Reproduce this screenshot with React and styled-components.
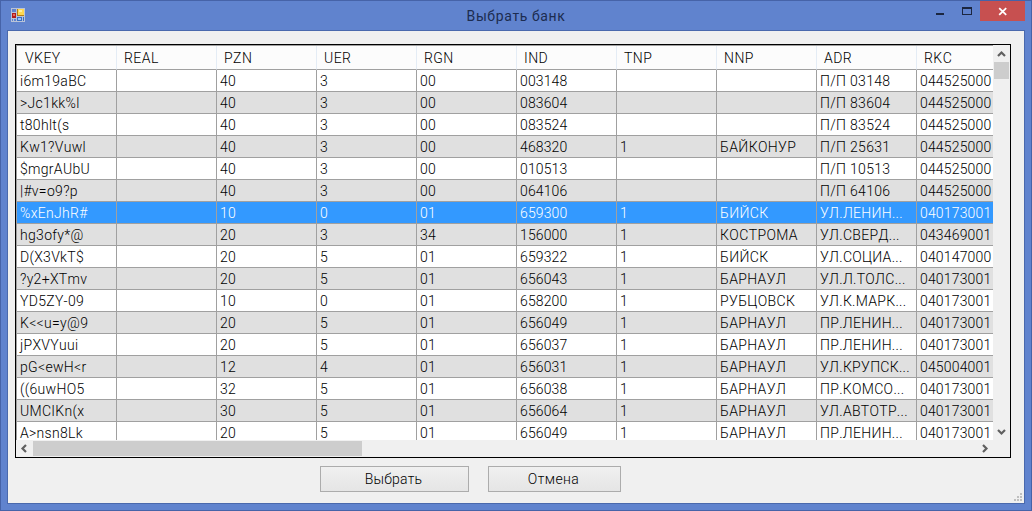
import React from 'react';
import styled, { createGlobalStyle, css } from 'styled-components';

const GlobalStyle = createGlobalStyle`
  * { box-sizing: border-box; }
  html, body, #root { margin: 0; height: 100%; }
  body { overflow: hidden; font-family: Roboto, "Liberation Sans", sans-serif; font-weight: 300; font-size: 14px; color: #000; font-kerning: none; }
`;

const Window = styled.main`
  width: 1032px; height: 511px; display: flex; flex-direction: column;
  background: #6083ce; border: 1px solid #4663a8; padding: 0 6px 6px;
`;
const TitleBar = styled.header`
  height: 29px; flex: none; display: grid; grid-template-columns: 290px 1fr 290px;
`;
const AppIcon = styled.svg`margin: 7px 0 0 4px;`;
const Title = styled.h1`
  margin: 0; padding-top: 5px; text-align: center; font-size: 14px; line-height: 20px; font-weight: 400;
  color: #1c2c50; letter-spacing: .6px;
`;
const Controls = styled.div`display: flex; justify-content: flex-end; align-items: flex-start;`;
const Control = styled.button`
  border: 0; padding: 0; height: 20px; width: ${p => p.$w}px; background: ${p => p.$close ? '#c75050' : 'transparent'};
  svg { display: block; }
`;
const Client = styled.section`
  flex: 1; min-height: 0; background: #f0f0f0; border: 1px solid #4a69ad; padding: 13px 13px 0 7px;
  display: flex; flex-direction: column; position: relative;
`;
const Grid = styled.div`
  width: 996px; height: 414px; border: 1px solid #000; flex: none;
  display: grid; grid-template-columns: 977px 17px; grid-template-rows: 395px 17px;
`;
const Viewport = styled.div`overflow: hidden; background: #fff; border: solid #a0a0a0; border-width: 1px 0 0 1px;`;
const Row = styled.div`
  display: flex; width: 1000px; height: 22px; color: ${p => p.$selected ? '#fff' : '#000'};
  background: ${p => p.$selected ? '#3399ff' : p.$alt ? '#e0e0e0' : '#fff'};
`;
const HeaderRow = styled(Row)`height: 24px; background: #fcfcfc;`;
const Cell = styled.div`
  width: 100px; flex: none; padding: 0 0 0 3px; line-height: 23px; white-space: nowrap; overflow: hidden;
  border: solid #a0a0a0; border-width: 0 1px 1px 0; letter-spacing: ${p => p.$track}px;
`;
const HeaderCell = styled(Cell)`
  padding: 1px 0 0 7px; line-height: 23px; border-right-color: #e4ecf5; letter-spacing: .45px;
  &:first-child { padding-left: 8px; }
`;
const scroll = css`background: #f0f0f0; display: flex;`;
const VScroll = styled.div`${scroll} flex-direction: column; padding-left: 1px; justify-content: space-between;`;
const HScroll = styled.div`${scroll} align-items: center; justify-content: space-between;`;
const VThumb = styled.div`width: 15px; height: 17px; background: #cdcdcd; margin-bottom: auto;`;
const HThumb = styled.div`width: 329px; height: 15px; background: #cdcdcd; margin-right: auto;`;
const Arrow = styled.svg`display: block; flex: none;`;
const Actions = styled.footer`display: flex; gap: 19px; margin: 8px 0 0 305px;`;
const Button = styled.button`
  width: ${p => p.$w}px; height: 26px; padding: 0 2px 0 0; border: 1px solid #acacac;
  background: linear-gradient(#f0f0f0, #e5e5e5); font: inherit; font-kerning: none; color: #000; letter-spacing: ${p => p.$track}px;
`;
const Grip = styled.svg`position: absolute; right: 0; bottom: 0;`;

const columns = ['VKEY', 'REAL', 'PZN', 'UER', 'RGN', 'IND', 'TNP', 'NNP', 'ADR', 'RKC'];
const tracking = [0.3, 0, 0.14, 0.14, 0.14, 0.14, 0.14, 0.38, 0.3, 0.17];
const rows = [
  ['i6m19aBC', '', '40', '3', '00', '003148', '', '', 'П/П 03148', '044525000'],
  ['>Jc1kk%l', '', '40', '3', '00', '083604', '', '', 'П/П 83604', '044525000'],
  ['t80hlt(s', '', '40', '3', '00', '083524', '', '', 'П/П 83524', '044525000'],
  ['Kw1?Vuwl', '', '40', '3', '00', '468320', '1', 'БАЙКОНУР', 'П/П 25631', '044525000'],
  ['$mgrAUbU', '', '40', '3', '00', '010513', '', '', 'П/П 10513', '044525000'],
  ['|#v=o9?p', '', '40', '3', '00', '064106', '', '', 'П/П 64106', '044525000'],
  ['%xEnJhR#', '', '10', '0', '01', '659300', '1', 'БИЙСК', 'УЛ.ЛЕНИН...', '040173001'],
  ['hg3ofy*@', '', '20', '3', '34', '156000', '1', 'КОСТРОМА', 'УЛ.СВЕРД...', '043469001'],
  ['D(X3VkT$', '', '20', '5', '01', '659322', '1', 'БИЙСК', 'УЛ.СОЦИА...', '040147000'],
  ['?y2+XTmv', '', '20', '5', '01', '656043', '1', 'БАРНАУЛ', 'УЛ.Л.ТОЛС...', '040173001'],
  ['YD5ZY-09', '', '10', '0', '01', '658200', '1', 'РУБЦОВСК', 'УЛ.К.МАРК...', '040173001'],
  ['K<<u=y@9', '', '20', '5', '01', '656049', '1', 'БАРНАУЛ', 'ПР.ЛЕНИН...', '040173001'],
  ['jPXVYuui', '', '20', '5', '01', '656037', '1', 'БАРНАУЛ', 'ПР.ЛЕНИН...', '040173001'],
  ['pG<ewH<r', '', '12', '4', '01', '656031', '1', 'БАРНАУЛ', 'УЛ.КРУПСК...', '045004001'],
  ['((6uwHO5', '', '32', '5', '01', '656038', '1', 'БАРНАУЛ', 'ПР.КОМСО...', '040173001'],
  ['UMCIKn(x', '', '30', '5', '01', '656064', '1', 'БАРНАУЛ', 'УЛ.АВТОТР...', '040173001'],
  ['A>nsn8Lk', '', '20', '5', '01', '656049', '1', 'БАРНАУЛ', 'ПР.ЛЕНИН...', '040173001'],
];

export default function App() {
  return (
    <>
      <GlobalStyle />
      <Window>
        <TitleBar>
          <AppIcon width="14" height="14" viewBox="0 0 14 14" shapeRendering="crispEdges">
            <path fill="#b9c3d8" d="M0 0h14v14H0z" />
            <path fill="#6083ce" d="M1 1h4v3H1zM1 11h1v2H1zM3 11h2v2H3z" />
            <path fill="#b01c1c" d="M1 5h4v5H1z" />
            <path fill="#e66a5a" d="M2 6h2v2H2z" />
            <path fill="#b57d14" d="M6 1h7v7H6z" />
            <path fill="#ffd84f" d="M7 1h6v6H7z" />
            <path fill="#fff0a0" d="M8 2h3v2H8z" />
            <path fill="#3b6fc4" d="M6 9h5v4H6zM12 9h1v4h-1z" />
            <path fill="#9cc4f5" d="M7 10h3v2H7z" />
          </AppIcon>
          <Title>Выбрать банк</Title>
          <Controls>
            <Control $w={28} aria-label="Свернуть"><svg width="28" height="20"><path d="M11 12h8v2h-8z" fill="#1b2640" /></svg></Control>
            <Control $w={27} aria-label="Развернуть"><svg width="27" height="20"><path fillRule="evenodd" d="M9 6h10v8H9zM10 8v5h8V8z" fill="#1b2640" /></svg></Control>
            <Control $w={45} $close aria-label="Закрыть"><svg width="45" height="20"><path d="M19.2 7.2l7 6.6M26.2 7.2l-7 6.6" stroke="#fff" strokeWidth="1.8" /></svg></Control>
          </Controls>
        </TitleBar>
        <Client>
          <Grid>
            <Viewport>
              <HeaderRow>{columns.map(c => <HeaderCell key={c}>{c}</HeaderCell>)}</HeaderRow>
              {rows.map((r, i) => (
                <Row key={i} $alt={i % 2 === 1} $selected={i === 6}>
                  {r.map((v, j) => <Cell key={j} $track={tracking[j]}>{v}</Cell>)}
                </Row>
              ))}
            </Viewport>
            <VScroll>
              <Arrow width="15" height="17"><path d="M4 11l3.5-3.5L11 11" fill="none" stroke="#606060" strokeWidth="2.2" /></Arrow>
              <VThumb />
              <Arrow width="15" height="17"><path d="M4 7l3.5 3.5L11 7" fill="none" stroke="#606060" strokeWidth="2.2" /></Arrow>
            </VScroll>
            <HScroll>
              <Arrow width="17" height="15"><path d="M10 4L6.500 7.500 10 11" fill="none" stroke="#606060" strokeWidth="2.2" /></Arrow>
              <HThumb />
              <Arrow width="17" height="15"><path d="M7 4l3.500 3.500L7 11" fill="none" stroke="#606060" strokeWidth="2.2" /></Arrow>
            </HScroll>
          </Grid>
          <Actions>
            <Button $w={149} $track={0.15}>Выбрать</Button>
            <Button $w={133} $track={0.4}>Отмена</Button>
          </Actions>
          <Grip width="10" height="10"><path fill="#bfbfbf" d="M6 0h2v2H6zM3 3h2v2H3zM6 3h2v2H6zM0 6h2v2H0zM3 6h2v2H3zM6 6h2v2H6z" /></Grip>
        </Client>
      </Window>
    </>
  );
}
